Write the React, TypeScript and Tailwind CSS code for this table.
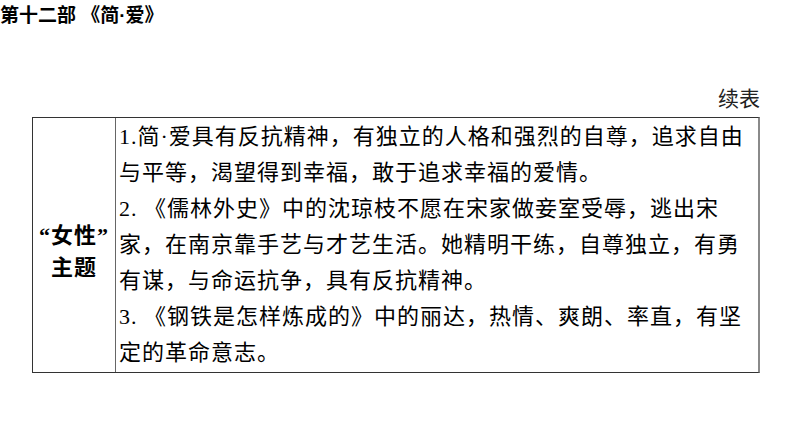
export default function App() {
  const lines = [
    '1.简·爱具有反抗精神，有独立的人格和强烈的自尊，追求自由',
    '与平等，渴望得到幸福，敢于追求幸福的爱情。',
    '2. 《儒林外史》中的沈琼枝不愿在宋家做妾室受辱，逃出宋',
    '家，在南京靠手艺与才艺生活。她精明干练，自尊独立，有勇',
    '有谋，与命运抗争，具有反抗精神。',
    '3. 《钢铁是怎样炼成的》中的丽达，热情、爽朗、率直，有坚',
    '定的革命意志。',
  ];

  return (
    <div className="w-[794px] h-[447px] bg-white text-black flex flex-col">
      {/* page header */}
      <div className="h-[32px] leading-[32px] text-[19px] font-bold font-['Liberation_Sans','Noto_Sans_CJK_SC',sans-serif] whitespace-nowrap">
        第十二部 《简·爱》
      </div>

      <div className="mt-[50px] h-[30px] leading-[30px] w-[760px] text-right text-[21px] text-[#222] font-['Noto_Sans_CJK_SC',sans-serif]">
        续表
      </div>

      <div className="mt-[5px] ml-[32px] w-[728px] h-[256px] flex border border-[#333] border-r-2 border-r-[#8a8a8a] font-['Liberation_Serif','Noto_Sans_CJK_SC',serif]">
        <div className="w-[83px] shrink-0 border-r border-[#666] flex flex-col items-center justify-center pt-[14px] text-[22px] font-bold">
          <div className="leading-[32px] whitespace-nowrap tracking-[1px]">“女性”</div>
          <div className="leading-[32px] whitespace-nowrap tracking-[1px]">主题</div>
        </div>
        <div className="flex-1 pl-[3px] pt-[1px] text-[22px] tracking-[1px]">
          {lines.map((l, i) => (
            <div key={i} className="leading-[36px] whitespace-nowrap">
              {l}
            </div>
          ))}
        </div>
      </div>
    </div>
  );
}
